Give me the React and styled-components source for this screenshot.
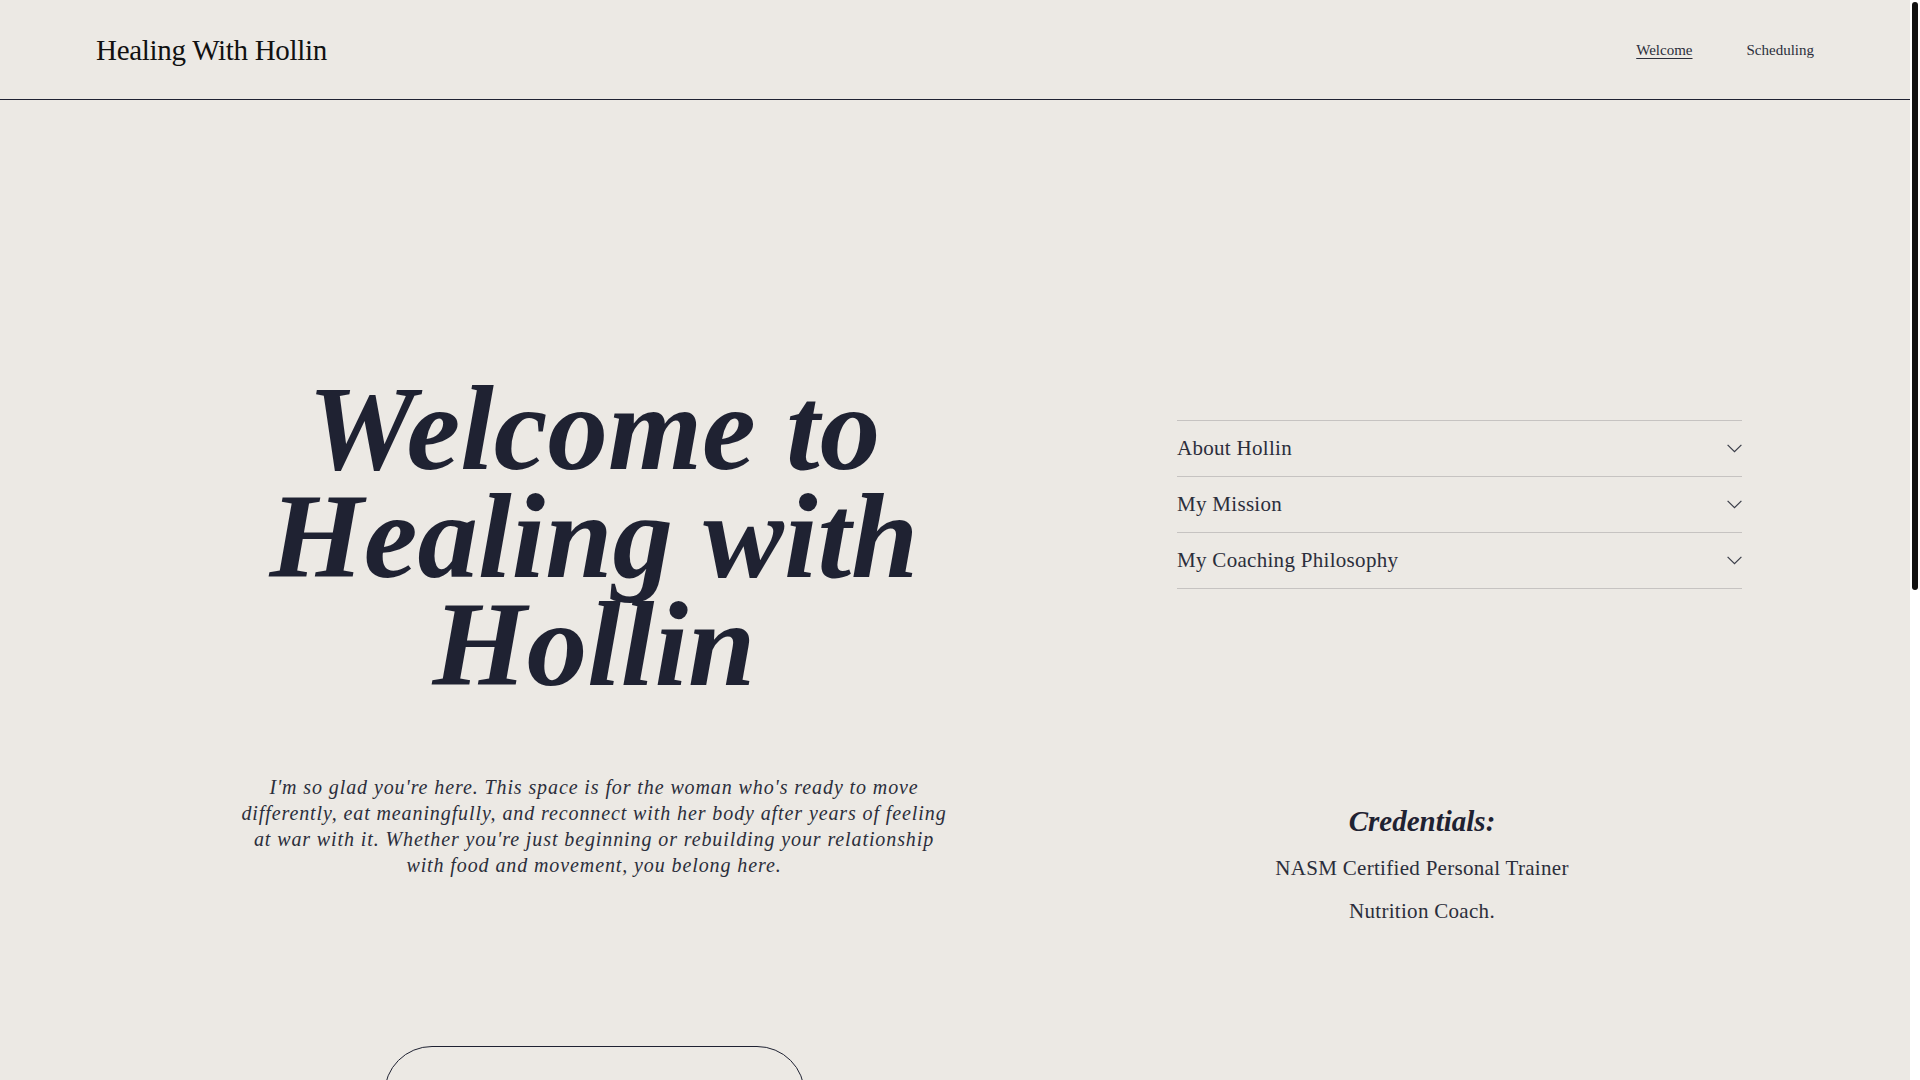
import React, { useState } from 'react';
import styled, { createGlobalStyle } from 'styled-components';

const SECTIONS = [
  {
    title: 'About Hollin',
    body: "I'm a certified personal trainer and nutrition coach who helps women find strength, balance and ease in their bodies.",
  },
  {
    title: 'My Mission',
    body: 'To help women build a peaceful, lasting relationship with food and movement.',
  },
  {
    title: 'My Coaching Philosophy',
    body: 'Small, steady changes. No shame, no extremes, just support that fits your life.',
  },
];

function App() {
  const [openIndex, setOpenIndex] = useState(-1);

  return (
    <Page>
      <GlobalStyle />
      <Header>
        <Brand>Healing With Hollin</Brand>
        <Nav>
          <NavLink href="#welcome" active>Welcome</NavLink>
          <NavLink href="#scheduling">Scheduling</NavLink>
        </Nav>
      </Header>

      <Hero id="welcome">
        <IntroColumn>
          <Headline>Welcome to Healing with Hollin</Headline>
          <Lead>
            I'm so glad you're here. This space is for the woman who's ready to move differently, eat
            meaningfully, and reconnect with her body after years of feeling at war with it. Whether
            you're just beginning or rebuilding your relationship with food and movement, you belong here.
          </Lead>
          <CtaButton>Book a Session</CtaButton>
        </IntroColumn>

        <InfoColumn>
          <Accordion>
            {SECTIONS.map((section, i) => (
              <AccordionItem key={section.title}>
                <AccordionTrigger onClick={() => setOpenIndex(openIndex === i ? -1 : i)}>
                  <span>{section.title}</span>
                  <Chevron open={openIndex === i} width="15" height="9" viewBox="0 0 15 9">
                    <polyline points="0.6,0.8 7.5,7.7 14.4,0.8" fill="none" stroke="currentColor" strokeWidth="1.2" />
                  </Chevron>
                </AccordionTrigger>
                {openIndex === i && <AccordionBody>{section.body}</AccordionBody>}
              </AccordionItem>
            ))}
          </Accordion>

          <Credentials>
            <h3>Credentials:</h3>
            <p>NASM Certified Personal Trainer</p>
            <p>Nutrition Coach.</p>
          </Credentials>
        </InfoColumn>
      </Hero>

      {/* scroll indicator drawn over the right edge */}
      <ScrollTrack>
        <ScrollThumb />
      </ScrollTrack>
    </Page>
  );
}

const GlobalStyle = createGlobalStyle`
  html, body {
    margin: 0;
    padding: 0;
    background: #ece9e4;
  }

  body {
    font-family: "Liberation Serif", "Times New Roman", serif;
    color: #1f2232;
  }
`;

const Page = styled.div`
  margin-right: 10px;
  min-height: 1980px;
  background: #ece9e4;
`;

const ScrollTrack = styled.div`
  position: fixed;
  top: 0;
  right: 0;
  width: 10px;
  height: 100vh;
  background: #ffffff;
`;

const ScrollThumb = styled.div`
  margin: 2px 2px 0 2px;
  height: 588px;
  border-radius: 3px;
  background: #111111;
`;

const Header = styled.header`
  height: 99px;
  display: flex;
  align-items: center;
  justify-content: space-between;
  padding: 1px 96px 0 96px;
  box-sizing: border-box;
  height: 100px;
  border-bottom: 1px solid #1f2232;
`;

const Brand = styled.div`
  font-size: 29px;
  letter-spacing: -0.3px;
  color: #111111;
`;

const Nav = styled.nav`
  display: flex;
  gap: 54px;
  align-items: center;
`;

const NavLink = styled.a`
  font-size: 15px;
  color: #2b2e3b;
  text-decoration: ${props => props.active ? 'underline' : 'none'};
  text-underline-offset: 3px;
`;

const Hero = styled.main`
  display: grid;
  grid-template-columns: 900px 756px;
  padding: 274px 0 0 144px;
  min-height: 1880px;
  box-sizing: border-box;
`;

const IntroColumn = styled.section`
  display: flex;
  flex-direction: column;
  align-items: center;
`;

const Headline = styled.h1`
  margin: 0;
  max-width: 720px;
  font-size: 121px;
  line-height: 108px;
  font-weight: 700;
  font-style: italic;
  text-align: center;
  color: #1f2232;
`;

const Lead = styled.p`
  margin: 76px 0 0 0;
  max-width: 712px;
  font-size: 20px;
  line-height: 26px;
  font-style: italic;
  letter-spacing: 0.9px;
  text-align: center;
  color: #2b2e3b;
`;

const CtaButton = styled.button`
  margin-top: 168px;
  width: 421px;
  padding: 40px 0;
  border: 1px solid #1f2232;
  border-radius: 48px;
  background: transparent;
  font-family: "Liberation Serif", "Times New Roman", serif;
  font-size: 18px;
  color: #1f2232;
  cursor: pointer;
`;

const InfoColumn = styled.section`
  display: flex;
  flex-direction: column;
  padding-top: 46px;
`;

const Accordion = styled.div`
  width: 565px;
  margin-left: 133px;
  border-top: 1px solid #c6c3c1;
`;

const AccordionItem = styled.div`
  border-bottom: 1px solid #c6c3c1;
`;

const AccordionTrigger = styled.button`
  width: 100%;
  display: flex;
  align-items: center;
  justify-content: space-between;
  padding: 12px 0;
  border: none;
  background: transparent;
  font-family: "Liberation Serif", "Times New Roman", serif;
  font-size: 21px;
  line-height: 31px;
  letter-spacing: 0.3px;
  color: #2b2e3b;
  text-align: left;
  cursor: pointer;
`;

const Chevron = styled.svg`
  color: #3a3d48;
  transform: rotate(${props => props.open ? '180deg' : '0deg'});
`;

const AccordionBody = styled.div`
  padding: 0 0 16px 0;
  font-size: 18px;
  line-height: 1.5;
  color: #2b2e3b;
`;

const Credentials = styled.div`
  margin-top: 215px;
  text-align: center;

  h3 {
    margin: 0 0 8px 0;
    font-size: 29px;
    line-height: 1.2;
    font-weight: 700;
    font-style: italic;
    color: #1f2232;
  }

  p {
    margin: 0;
    font-size: 21px;
    line-height: 43px;
    letter-spacing: 0.3px;
    color: #2b2e3b;
  }
`;

export default App;
